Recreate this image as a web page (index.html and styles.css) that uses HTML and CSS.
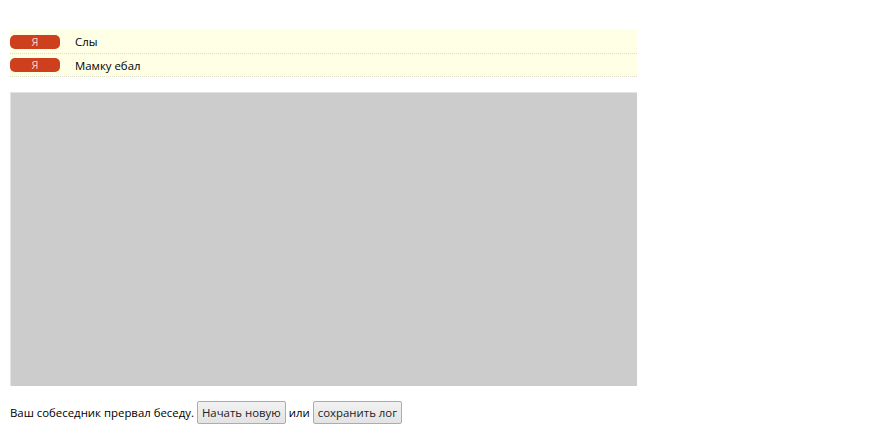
FILE: index.html
```html
<!DOCTYPE html>
<html lang="ru">
<head>
    <meta charset="UTF-8">
    <title>Чат</title>
    <link rel="stylesheet" href="styles.css">
</head>
<body>
    <div class="chat">
        <div class="log">
            <div class="msg">
                <span class="who">Я</span>
                <span class="text">Слы</span>
            </div>
            <div class="msg">
                <span class="who">Я</span>
                <span class="text">Мамку ебал</span>
            </div>
        </div>

        <div class="screen"></div>

        <div class="status">
            Ваш собеседник прервал беседу.
            <button class="btn">Начать новую</button>
            или
            <button class="btn">сохранить лог</button>
        </div>
    </div>
</body>
</html>
```

FILE: styles.css
```css
body {
    margin: 0;
    background: #fff;
    font-family: "Open Sans", "Noto Sans", sans-serif;
    font-size: 11.4px;
    color: #000;
}

.chat {
    width: 627px;
    padding: 30px 0 0 10px;
}

.log {
    background: #ffffe6;
}

.msg {
    display: flex;
    align-items: center;
    height: 23px;
    border-bottom: 1px dotted #ddddc8;
}

.msg:last-child {
    height: 22px;
}

.who {
    width: 50px;
    height: 14px;
    line-height: 14px;
    border-radius: 5px;
    background: #cd3f1d;
    color: #f3d6cc;
    text-align: center;
    font-size: 11px;
}

.text {
    margin-left: 15px;
}

.screen {
    margin-top: 15px;
    height: 293px;
    background: #cccccc;
    border-top: 1px solid #e4e4e4;
    border-left: 1px solid #e4e4e4;
}

.status {
    margin-top: 15px;
    display: flex;
    align-items: center;
    gap: 3px;
    width: 700px;
}

.btn {
    font-family: inherit;
    font-size: 11.4px;
    color: #222;
    height: 23px;
    padding: 0 4px;
    border: 1px solid #acacac;
    border-radius: 2px;
    background: linear-gradient(#f2f2f2, #e3e3e3);
}
```
